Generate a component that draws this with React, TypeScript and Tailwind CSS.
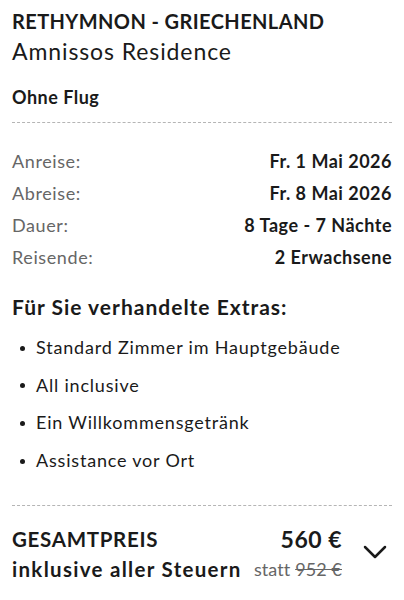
import { ChevronDown } from "lucide-react";

const DETAILS = [
  { label: "Anreise:", value: "Fr. 1 Mai 2026" },
  { label: "Abreise:", value: "Fr. 8 Mai 2026" },
  { label: "Dauer:", value: "8 Tage - 7 Nächte" },
  { label: "Reisende:", value: "2 Erwachsene" },
];

const EXTRAS = [
  "Standard Zimmer im Hauptgebäude",
  "All inclusive",
  "Ein Willkommensgetränk",
  "Assistance vor Ort",
];

const App = () => {
  return (
    <div
      className="w-[404px] h-[600px] bg-white text-[#1a1a1a] px-3 overflow-hidden"
      style={{ fontFamily: 'Lato, "Noto Sans", sans-serif' }}
    >
      {/* ---------------- Header ---------------- */}
      <div className="pt-[9px]">
        <div className="text-[20px] leading-[24px] font-bold tracking-[0.4px]">
          RETHYMNON - GRIECHENLAND
        </div>
        <div className="text-[23px] leading-[28px] font-normal tracking-[0.9px] mt-[4px]">
          Amnissos Residence
        </div>
        <div className="text-[18px] leading-[22px] font-bold tracking-[0.5px] mt-[21px]">
          Ohne Flug
        </div>
      </div>

      <div className="border-t border-dashed border-[#b5b5b5] mt-[14px]" />

      {/* ---------------- Details ---------------- */}
      <div className="mt-[27px] flex flex-col gap-[10px]">
        {DETAILS.map((item) => (
          <div
            key={item.label}
            className="flex justify-between items-center text-[18px] leading-[22px]"
          >
            <span className="text-[#666] font-normal tracking-[0.6px]">{item.label}</span>
            <span className="font-bold tracking-[0.5px]">{item.value}</span>
          </div>
        ))}
      </div>

      {/* ---------------- Extras ---------------- */}
      <div className="mt-[26px] text-[21px] leading-[26px] font-bold tracking-[1px]">
        Für Sie verhandelte Extras:
      </div>
      <ul className="mt-[15px] flex flex-col gap-[13.7px]">
        {EXTRAS.map((item) => (
          <li
            key={item}
            className="flex items-center text-[18px] leading-[24px] tracking-[0.8px]"
          >
            <span className="w-[5px] h-[5px] rounded-full bg-[#1a1a1a] ml-[8px] mr-[11px] mt-[2px]" />
            {item}
          </li>
        ))}
      </ul>

      <div className="border-t border-dashed border-[#b5b5b5] mt-[33px]" />

      {/* ---------------- Price ---------------- */}
      <div className="mt-[18px] flex items-start">
        <div className="flex-1 font-bold text-[20.5px] leading-[30px]">
          <div className="tracking-[0.7px]">GESAMTPREIS</div>
          <div className="tracking-[1.3px]">inklusive aller Steuern</div>
        </div>
        <div className="flex flex-col items-end">
          <div className="font-bold text-[23px] leading-[30px] tracking-[0.5px]">560 €</div>
          <div className="text-[18px] leading-[30px] text-[#666] font-normal tracking-[0.1px]">
            statt <span className="line-through">952 €</span>
          </div>
        </div>
        <ChevronDown
          className="w-[40px] h-[40px] ml-[13px] -mr-[3px] mt-[8px] text-[#1a1a1a]"
          strokeWidth={1.5}
        />
      </div>
    </div>
  );
};

export default App;
